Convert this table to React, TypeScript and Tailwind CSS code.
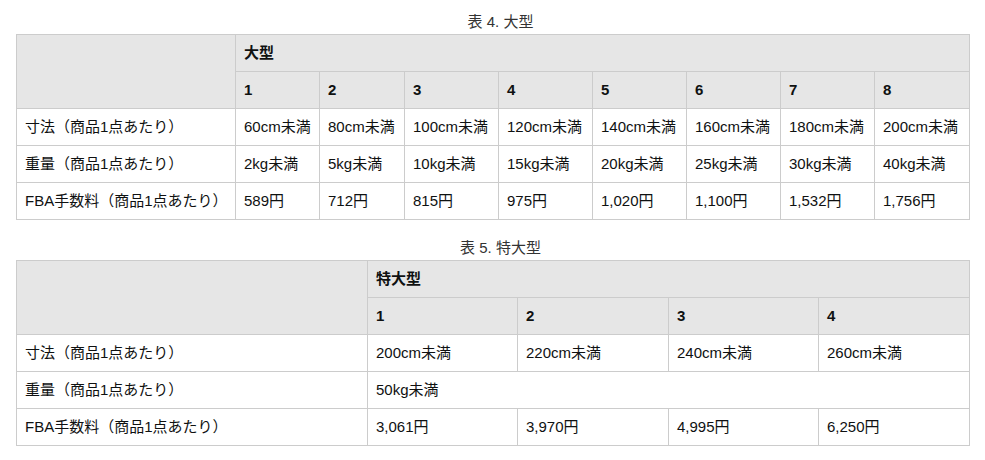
import React from 'react';

type Cell = { text: string; colSpan?: number };

const font = { fontFamily: '"Liberation Sans", "Noto Sans CJK JP", sans-serif' };

const largeRows: { label: string; cells: Cell[] }[] = [
  {
    label: '寸法（商品1点あたり）',
    cells: ['60cm未満', '80cm未満', '100cm未満', '120cm未満', '140cm未満', '160cm未満', '180cm未満', '200cm未満'].map((t) => ({ text: t })),
  },
  {
    label: '重量（商品1点あたり）',
    cells: ['2kg未満', '5kg未満', '10kg未満', '15kg未満', '20kg未満', '25kg未満', '30kg未満', '40kg未満'].map((t) => ({ text: t })),
  },
  {
    label: 'FBA手数料（商品1点あたり）',
    cells: ['589円', '712円', '815円', '975円', '1,020円', '1,100円', '1,532円', '1,756円'].map((t) => ({ text: t })),
  },
];

const xlRows: { label: string; cells: Cell[] }[] = [
  {
    label: '寸法（商品1点あたり）',
    cells: ['200cm未満', '220cm未満', '240cm未満', '260cm未満'].map((t) => ({ text: t })),
  },
  {
    label: '重量（商品1点あたり）',
    cells: [{ text: '50kg未満', colSpan: 4 }],
  },
  {
    label: 'FBA手数料（商品1点あたり）',
    cells: ['3,061円', '3,970円', '4,995円', '6,250円'].map((t) => ({ text: t })),
  },
];

const cellCls = 'border border-[#cccccc] h-[37px] px-2 py-0 text-left align-middle whitespace-nowrap';

interface SizeTableProps {
  caption: string;
  group: string;
  widths: number[];
  rows: { label: string; cells: Cell[] }[];
}

const SizeTable: React.FC<SizeTableProps> = ({ caption, group, widths, rows }) => {
  const n = widths.length - 1;
  return (
    <div>
      <div className="text-center text-[15px] leading-5 text-[#333333] mb-[2px]">{caption}</div>
      <table className="table-fixed border-collapse w-[953px] text-[15px] leading-5 text-[#0f1111]">
        <colgroup>
          {widths.map((w, i) => (
            <col key={i} style={{ width: w }} />
          ))}
        </colgroup>
        <thead>
          <tr className="bg-[#e6e6e6]">
            <th rowSpan={2} className={cellCls}></th>
            <th colSpan={n} className={`${cellCls} font-bold`}>
              {group}
            </th>
          </tr>
          <tr className="bg-[#e6e6e6]">
            {Array.from({ length: n }, (_, i) => (
              <th key={i} className={`${cellCls} font-bold`}>
                {i + 1}
              </th>
            ))}
          </tr>
        </thead>
        <tbody>
          {rows.map((r) => (
            <tr key={r.label}>
              <td className={cellCls}>{r.label}</td>
              {r.cells.map((c, i) => (
                <td key={i} colSpan={c.colSpan} className={cellCls}>
                  {c.text}
                </td>
              ))}
            </tr>
          ))}
        </tbody>
      </table>
    </div>
  );
};

export default function App() {
  return (
    <div className="w-[985px] h-[460px] bg-white pl-4 pt-3" style={font}>
      <SizeTable caption="表 4. 大型" group="大型" widths={[219, 84, 85, 94, 94, 94, 94, 94, 95]} rows={largeRows} />
      <div className="h-[18px]" />
      <SizeTable caption="表 5. 特大型" group="特大型" widths={[351, 150, 151, 150, 151]} rows={xlRows} />
    </div>
  );
}
